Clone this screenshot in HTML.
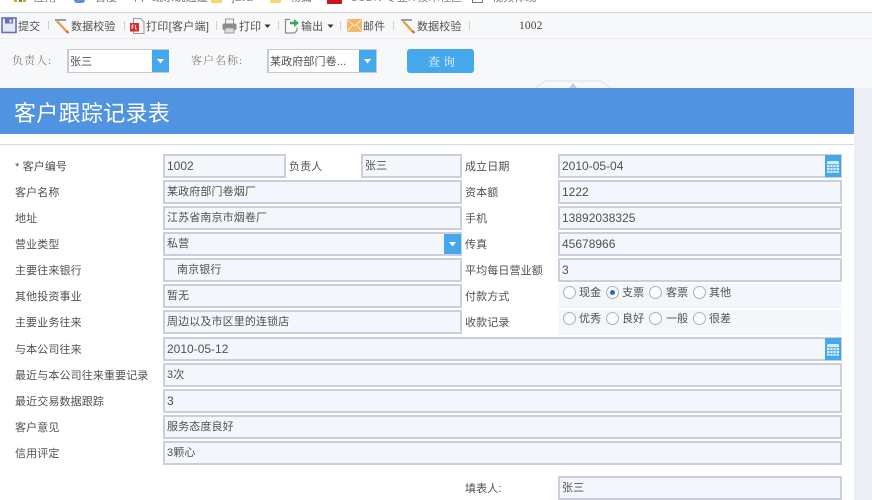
<!DOCTYPE html>
<html lang="zh"><head><meta charset="utf-8"><style>
html,body{margin:0;padding:0;background:#fff}
#p{position:relative;width:872px;height:500px;overflow:hidden;background:#fff;font-family:"Liberation Sans","Noto Sans CJK SC",sans-serif;font-size:11px;letter-spacing:.12px;color:#505050;filter:blur(.35px)}
#p div,#p svg{position:absolute}
.t{white-space:nowrap;line-height:16px;height:16px;margin-top:1px}
.f{box-sizing:border-box;height:24px;background:#f3f7fb;border:2px solid #cbcedc;line-height:21px;padding-left:2px;color:#505050;white-space:nowrap;overflow:hidden}
.n{font-size:12px;letter-spacing:0}
.l{white-space:nowrap;line-height:16px;height:16px;color:#505050;margin-top:1px}
.s{width:1px;height:9px;top:21px;background:#cfcfcf}
.b{background:#45a8ec}
.r{box-sizing:border-box;width:13px;height:13px;border:1px solid #b0b0b0;border-radius:50%;background:#fbfbfb}
</style></head><body><div id="p">
<div style="left:0;top:0;width:872px;height:12px;background:#fff;overflow:hidden">
<div class="t" style="left:34px;top:-11px;color:#777">应用</div>
<div style="left:14px;top:0;width:3px;height:2px;background:#e8a020"></div>
<div style="left:19px;top:0;width:3px;height:2px;background:#4aa04a"></div>
<div style="left:23px;top:0;width:3px;height:2px;background:#e8a020"></div>
<div style="left:74px;top:0;width:11px;height:3px;background:#5a8fe0;border-radius:0 0 6px 6px"></div>
<div class="t" style="left:95px;top:-11px;color:#777">百度</div>
<div class="t" style="left:130px;top:-11px;color:#777">个户端系统通道</div>
<div style="left:211px;top:0;width:11px;height:3px;background:#f7d774"></div>
<div class="t" style="left:232px;top:-11px;color:#777">java</div>
<div style="left:270px;top:0;width:11px;height:3px;background:#f7d774"></div>
<div class="t" style="left:290px;top:-11px;color:#777">物篇</div>
<div style="left:327px;top:0;width:15px;height:4px;background:#c8161d"></div>
<div class="t" style="left:350px;top:-11px;color:#888">CSDN-专业IT技术社区</div>
<div style="left:472px;top:0;width:9px;height:2px;border:1px solid #777;border-top:0"></div>
<div class="t" style="left:492px;top:-11px;color:#777">视频体现</div>
</div>
<div style="left:0;top:12px;width:872px;height:1px;background:#d2d2d2"></div>
<div style="left:0;top:13px;width:872px;height:25px;background:#f7f8fa"></div>
<div style="left:0;top:38px;width:872px;height:1px;background:#ececf0"></div>
<div style="left:0;top:39px;width:872px;height:49px;background:#f7f8fa"></div>

<svg style="left:1px;top:17px" width="16" height="17" viewBox="0 0 16 17"><rect x="1" y="1" width="14" height="14.500" fill="#e6e8f4" stroke="#6a6fb0" stroke-width="1.600"/><rect x="4" y="1.500" width="8" height="5" fill="#6a6fb0"/><rect x="8.500" y="2.500" width="2" height="3" fill="#e6e8f4"/></svg>
<div class="t" style="left:18px;top:18px">提交</div>
<div class="s" style="left:48px"></div>
<svg style="left:54px;top:18px" width="16" height="16" viewBox="0 0 16 16"><path d="M1 2h11" stroke="#8aa0b8" stroke-width="2"/><path d="M3 3l10 11" stroke="#e8a23c" stroke-width="2.400"/><path d="M12.500 13l2 2" stroke="#d9534f" stroke-width="2"/></svg>
<div class="t" style="left:71px;top:18px">数据校验</div>
<div class="s" style="left:124px"></div>
<svg style="left:129px;top:18px" width="16" height="16" viewBox="0 0 16 16"><path d="M4.500 .5h7l3.500 3.500v11.500h-10.500z" fill="#f8f8f8" stroke="#999"/><rect x="1" y="5" width="9" height="8.500" fill="#d32f2f"/><path d="M3 7h2M3 7v4M3 9h1.500M6.500 7v4h1.500" stroke="#fff" stroke-width=".8" fill="none"/></svg>
<div class="t" style="left:146px;top:18px;letter-spacing:.3px">打印[客户端]</div>
<div class="s" style="left:216px"></div>
<svg style="left:222px;top:18px" width="15" height="16" viewBox="0 0 15 16"><rect x="3.500" y="1" width="8" height="5" fill="#eee" stroke="#999"/><rect x="0.500" y="5.500" width="14" height="6.500" rx="1.500" fill="#8a8a8a"/><rect x="3" y="10" width="9" height="5" fill="#ddd" stroke="#999"/></svg>
<div class="t" style="left:239px;top:18px">打印</div>
<svg style="left:264px;top:24px" width="7" height="5" viewBox="0 0 7 5"><path d="M.5 .5h6l-3 3.500z" fill="#333"/></svg>
<div class="s" style="left:278px"></div>
<svg style="left:284px;top:18px" width="16" height="16" viewBox="0 0 16 16"><path d="M6 1.500h-4.500v13.500h9l2.500-2.500v-3" fill="#fafafa" stroke="#8a8a8a" stroke-width="1.200"/><path d="M6 5h5" stroke="#3cab4c" stroke-width="2.500"/><path d="M10 1l5 4-5 4z" fill="#3cab4c"/></svg>
<div class="t" style="left:301px;top:18px">输出</div>
<svg style="left:327px;top:24px" width="7" height="5" viewBox="0 0 7 5"><path d="M.5 .5h6l-3 3.500z" fill="#333"/></svg>
<div class="s" style="left:340px"></div>
<svg style="left:347px;top:19px" width="15" height="13" viewBox="0 0 15 13"><rect width="15" height="13" rx="1" fill="#f0b868"/><path d="M.5 1l7 6 7-6M.5 12l5-6M14.500 12l-5-6" stroke="#fbe3b8" fill="none"/></svg>
<div class="t" style="left:363px;top:18px">邮件</div>
<div class="s" style="left:393px"></div>
<svg style="left:400px;top:18px" width="16" height="16" viewBox="0 0 16 16"><path d="M1 2h11" stroke="#8aa0b8" stroke-width="2"/><path d="M3 3l10 11" stroke="#e8a23c" stroke-width="2.400"/><path d="M12.500 13l2 2" stroke="#d9534f" stroke-width="2"/></svg>
<div class="t" style="left:417px;top:18px">数据校验</div>
<div class="s" style="left:469px"></div>
<div class="t" style="left:519px;top:17px;font-family:'Liberation Serif',serif;font-size:11.500px;color:#444">1002</div>

<div class="t" style="left:12px;top:52px;font-family:'Liberation Serif','Noto Serif CJK SC',serif;color:#808080;letter-spacing:1px">负责人:</div>
<div style="left:67px;top:49px;width:102px;height:24px;box-sizing:border-box;background:#fff;border:1px solid #c6c9d8;border-left-width:2px;border-right-width:2px"></div>
<div class="t" style="left:70px;top:53px">张三</div>
<div class="b" style="left:152px;top:50px;width:17px;height:22px"></div>
<svg style="left:156px;top:59px" width="9" height="5"><path d="M1 0h7l-3.500 4.500z" fill="#fff"/></svg>
<div class="t" style="left:191px;top:52px;font-family:'Liberation Serif','Noto Serif CJK SC',serif;color:#808080;letter-spacing:1px">客户名称:</div>
<div style="left:267px;top:49px;width:110px;height:24px;box-sizing:border-box;background:#fff;border:1px solid #c6c9d8;border-left-width:2px;border-right-width:2px"></div>
<div class="t" style="left:270px;top:53px">某政府部门卷...</div>
<div class="b" style="left:359px;top:50px;width:17px;height:22px"></div>
<svg style="left:363px;top:59px" width="9" height="5"><path d="M1 0h7l-3.500 4.500z" fill="#fff"/></svg>
<div class="b" style="left:407px;top:49px;width:67px;height:24px;border-radius:3px"></div>
<div class="t" style="left:428px;top:53px;font-size:12px;color:#e8f4ff;letter-spacing:3px;font-family:'Liberation Serif','Noto Serif CJK SC',serif">查询</div>

<svg style="left:535px;top:80px" width="76" height="9"><path d="M0 8l10-7h56l10 7" fill="none" stroke="#e2e2e2"/><path d="M38 3l-4 5h8z" fill="#ccc"/></svg>

<div style="left:0;top:88px;width:854px;height:46px;background:#5093e0"></div>
<div class="t" style="left:14px;top:100px;font-size:22px;letter-spacing:.3px;line-height:26px;height:26px;color:#fff">客户跟踪记录表</div>
<div style="left:854px;top:88px;width:18px;height:412px;background:#eceef6"></div>
<div style="left:0;top:144px;width:854px;height:1px;background:#d5d8e8"></div>

<div class="l" style="left:15px;top:158px">* 客户编号</div>
<div class="l" style="left:15px;top:184px">客户名称</div>
<div class="l" style="left:15px;top:210px">地址</div>
<div class="l" style="left:15px;top:236px">营业类型</div>
<div class="l" style="left:15px;top:262px">主要往来银行</div>
<div class="l" style="left:15px;top:288px">其他投资事业</div>
<div class="l" style="left:15px;top:314px">主要业务往来</div>
<div class="l" style="left:15px;top:341px">与本公司往来</div>
<div class="l" style="left:15px;top:367px">最近与本公司往来重要记录</div>
<div class="l" style="left:15px;top:393px">最近交易数据跟踪</div>
<div class="l" style="left:15px;top:419px">客户意见</div>
<div class="l" style="left:15px;top:445px">信用评定</div>
<div class="l" style="left:289px;top:158px">负责人</div>
<div class="l" style="left:465px;top:158px">成立日期</div>
<div class="l" style="left:465px;top:184px">资本额</div>
<div class="l" style="left:465px;top:210px">手机</div>
<div class="l" style="left:465px;top:236px">传真</div>
<div class="l" style="left:465px;top:262px">平均每日营业额</div>
<div class="l" style="left:465px;top:288px">付款方式</div>
<div class="l" style="left:465px;top:314px">收款记录</div>
<div class="l" style="left:465px;top:480px">填表人:</div>

<div class="f n" style="left:163px;top:154px;width:123px">1002</div>
<div class="f" style="left:361px;top:154px;width:101px">张三</div>
<div class="f" style="left:163px;top:180px;width:299px">某政府部门卷烟厂</div>
<div class="f" style="left:163px;top:206px;width:299px">江苏省南京市烟卷厂</div>
<div class="f" style="left:163px;top:232px;width:299px">私营</div>
<div class="f" style="left:163px;top:258px;width:299px;padding-left:12px">南京银行</div>
<div class="f" style="left:163px;top:284px;width:299px">暂无</div>
<div class="f" style="left:163px;top:310px;width:299px">周边以及市区里的连锁店</div>
<div class="f n" style="left:163px;top:337px;width:679px">2010-05-12</div>
<div class="f" style="left:163px;top:363px;width:679px">3次</div>
<div class="f n" style="left:163px;top:389px;width:679px">3</div>
<div class="f" style="left:163px;top:415px;width:679px">服务态度良好</div>
<div class="f" style="left:163px;top:441px;width:679px">3颗心</div>
<div class="f n" style="left:558px;top:154px;width:284px">2010-05-04</div>
<div class="f n" style="left:558px;top:180px;width:284px">1222</div>
<div class="f n" style="left:558px;top:206px;width:284px">13892038325</div>
<div class="f n" style="left:558px;top:232px;width:284px">45678966</div>
<div class="f n" style="left:558px;top:258px;width:284px">3</div>
<div class="f" style="left:558px;top:476px;width:284px">张三</div>
<div style="left:558px;top:284px;width:284px;height:24px;background:#f3f7fb"></div>
<div style="left:558px;top:310px;width:284px;height:25px;background:#f3f7fb"></div>

<div class="b" style="left:444px;top:234px;width:17px;height:20px"></div>
<svg style="left:448px;top:242px" width="9" height="5"><path d="M1 0h7l-3.500 4.500z" fill="#fff"/></svg>

<div class="b" style="left:825px;top:155px;width:16px;height:22px"></div>
<svg style="left:826px;top:160px" width="14" height="13" viewBox="0 0 14 13"><rect x="1" y="1" width="12" height="12" rx="1.500" fill="#d6ecfb"/><path d="M1 4.500h12M1 7.500h12M1 10.500h12M4 4v9M7 4v9M10 4v9" stroke="#45a8ec" stroke-width=".8"/></svg>
<div class="b" style="left:825px;top:338px;width:16px;height:22px"></div>
<svg style="left:826px;top:343px" width="14" height="13" viewBox="0 0 14 13"><rect x="1" y="1" width="12" height="12" rx="1.500" fill="#d6ecfb"/><path d="M1 4.500h12M1 7.500h12M1 10.500h12M4 4v9M7 4v9M10 4v9" stroke="#45a8ec" stroke-width=".8"/></svg>

<div class="r" style="left:563px;top:286px"></div><div class="t" style="left:579px;top:284px">现金</div>
<div class="r" style="left:606px;top:286px"></div><div style="left:610px;top:290px;width:5px;height:5px;border-radius:50%;background:#1f6fd0"></div><div class="t" style="left:622px;top:284px">支票</div>
<div class="r" style="left:649px;top:286px"></div><div class="t" style="left:666px;top:284px">客票</div>
<div class="r" style="left:693px;top:286px"></div><div class="t" style="left:709px;top:284px">其他</div>
<div class="r" style="left:563px;top:312px"></div><div class="t" style="left:579px;top:310px">优秀</div>
<div class="r" style="left:606px;top:312px"></div><div class="t" style="left:622px;top:310px">良好</div>
<div class="r" style="left:649px;top:312px"></div><div class="t" style="left:666px;top:310px">一般</div>
<div class="r" style="left:693px;top:312px"></div><div class="t" style="left:709px;top:310px">很差</div>
</div></body></html>
